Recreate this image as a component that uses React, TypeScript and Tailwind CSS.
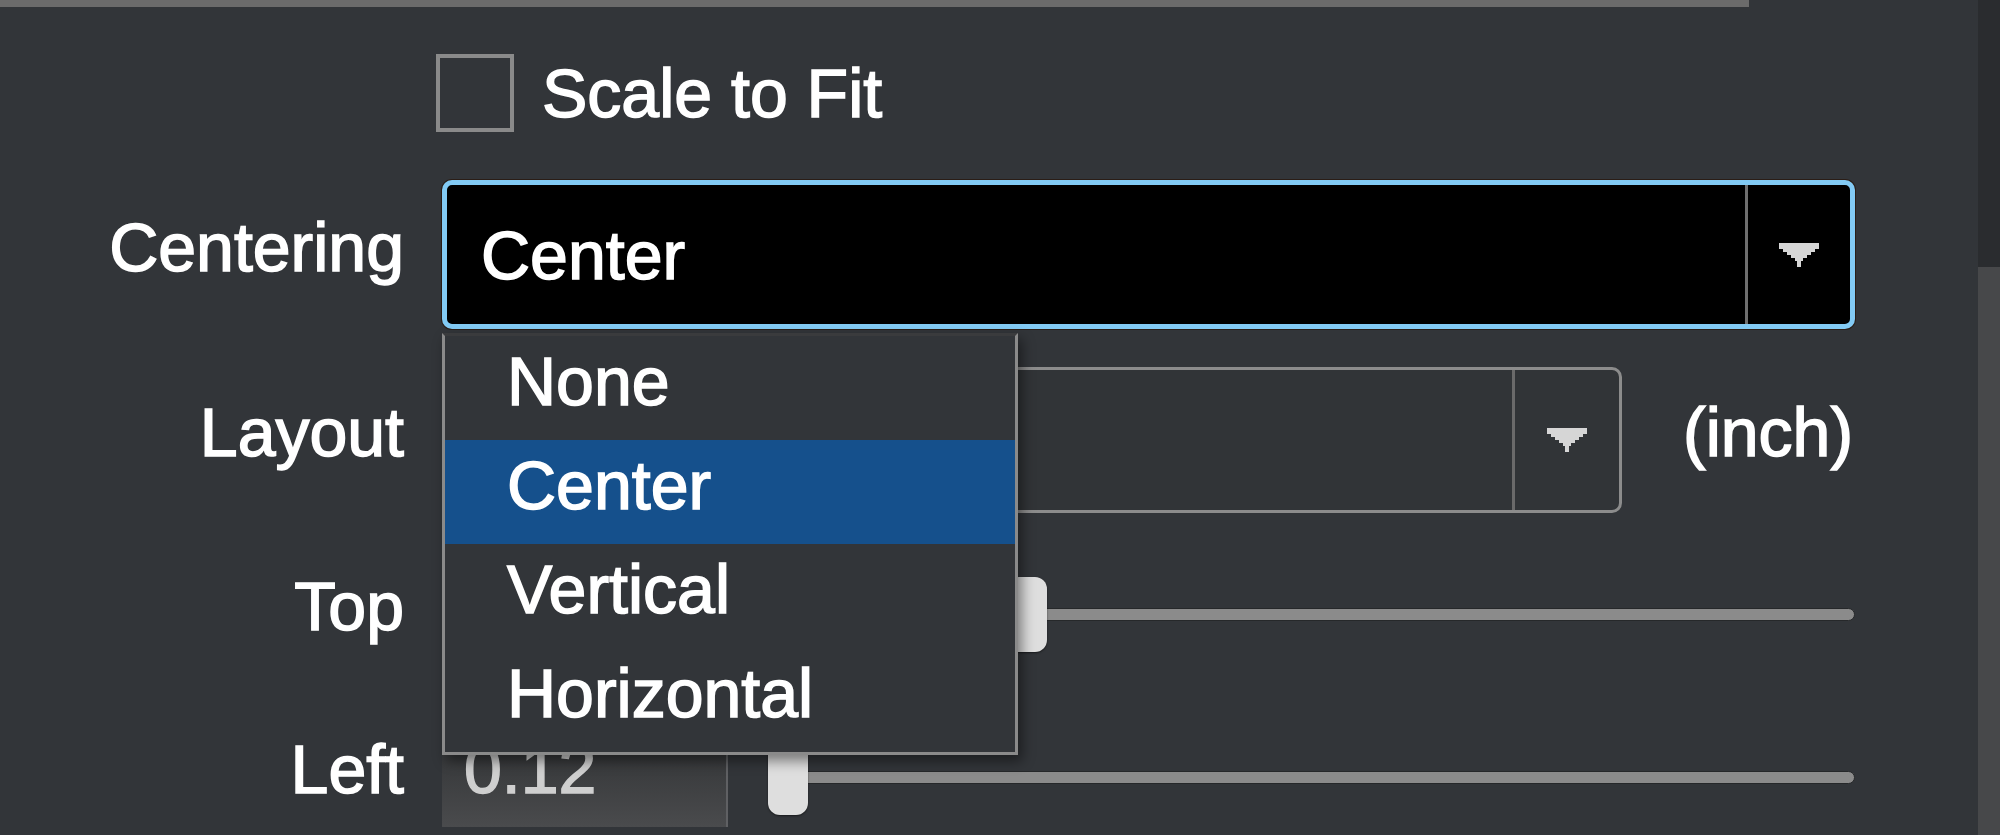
import React from "react";

const font = { fontFamily: '"Liberation Sans", Arial, Helvetica, sans-serif' };

function Arrow() {
  return (
    <svg width="40" height="24" viewBox="0 0 40 24" className="block">
      <path
        d="M0 0 H40 V6 H36 V9 H32 V12 H28 V15 H24 V18 H22 V24 H18 V18 H16 V15 H12 V12 H8 V9 H4 V6 H0 Z"
        fill="#d6d6d6"
      />
    </svg>
  );
}

function Slider({ offset }: { offset: number }) {
  return (
    <div className="relative h-[75px] w-[1087px] flex items-center">
      <div className="h-[13px] w-full rounded-full bg-[#8b8b8b] border border-[#26282a]" />
      <div
        className="absolute top-0 h-[75px] w-[40px] rounded-[12px] bg-[#dedede] shadow-[0_1px_2px_rgba(0,0,0,0.5)]"
        style={{ left: offset }}
      />
    </div>
  );
}

export default function App() {
  const label =
    "w-[404px] shrink-0 text-right text-white text-[68px] leading-none mb-[16px]";
  return (
    <div
      className="w-[2000px] h-[835px] bg-[#323539] flex overflow-hidden relative [-webkit-text-stroke-width:1.5px]"
      style={font}
    >
      <div className="flex-1 flex flex-col">
        <div className="h-[7px] w-[1749px] bg-[#6b6b6b]" />

        {/* Scale to fit */}
        <div className="mt-[47px] h-[78px] flex items-center pl-[436px]">
          <div className="w-[78px] h-[78px] border-4 border-[#8a8a8a] bg-[#323539]" />
          <span className="ml-[28px] text-white text-[68px] leading-none">
            Scale to Fit
          </span>
        </div>

        {/* Centering */}
        <div className="mt-[48px] h-[149px] flex items-center gap-[38px]">
          <div className={label}>Centering</div>
          <div className="w-[1413px] h-[149px] rounded-[10px] border-[5px] border-[#82caf4] bg-black flex shadow-[0_0_0_1px_#2a1d16]">
            <div className="flex-1 flex items-center pl-[34px] text-white text-[68px] leading-none">
              Center
            </div>
            <div className="w-[3px] bg-[#6f6f6f]" />
            <div className="w-[102px] flex items-center justify-center">
              <Arrow />
            </div>
          </div>
        </div>

        {/* Layout */}
        <div className="mt-[38px] h-[146px] flex items-center gap-[38px]">
          <div className={label}>Layout</div>
          <div className="w-[1180px] h-[146px] rounded-[10px] border-[3px] border-[#8c8c8c] bg-[#313437] flex">
            <div className="flex-1" />
            <div className="w-[3px] bg-[#6a6a6a]" />
            <div className="w-[104px] flex items-center justify-center">
              <Arrow />
            </div>
          </div>
          <div className="ml-[23px] text-white text-[68px] leading-none mb-[16px]">
            (inch)
          </div>
        </div>

        {/* Top */}
        <div className="mt-[51px] h-[100px] flex items-center gap-[38px]">
          <div className={label}>Top</div>
          <div className="w-[286px] h-[100px] bg-gradient-to-b from-[#2f3133] to-[#4a4b4d] border-r-2 border-[#5f6063]" />
          <div className="ml-[2px]">
            <Slider offset={239} />
          </div>
        </div>

        {/* Left */}
        <div className="mt-[63px] h-[100px] flex items-center gap-[38px]">
          <div className={label}>Left</div>
          <div className="w-[286px] h-[100px] bg-gradient-to-b from-[#2f3133] to-[#4a4b4d] border-r-2 border-[#5f6063] flex items-center pl-[22px] text-[#cfcfcf] text-[68px] leading-none">
            <span className="mb-[16px]">0.12</span>
          </div>
          <div className="ml-[2px]">
            <Slider offset={0} />
          </div>
        </div>
      </div>

      {/* right scrollbar strip */}
      <div className="w-[22px] flex flex-col">
        <div className="h-[267px] bg-[#2a2c2f]" />
        <div className="flex-1 bg-[#47484a]" />
      </div>

      {/* Dropdown menu overlay */}
      <div className="absolute left-[442px] top-[333px] w-[576px] border-[3px] border-[#8a8a8a] border-t-[#3a3b3d] bg-[#323539] shadow-[4px_6px_12px_rgba(0,0,0,0.45)]">
        {["None", "Center", "Vertical", "Horizontal"].map((o) => (
          <div
            key={o}
            className={
              "h-[104px] flex items-center pl-[62px] pb-[14px] text-white text-[68px] leading-none " +
              (o === "Center" ? "bg-[#15508c]" : "")
            }
          >
            {o}
          </div>
        ))}
      </div>
    </div>
  );
}
